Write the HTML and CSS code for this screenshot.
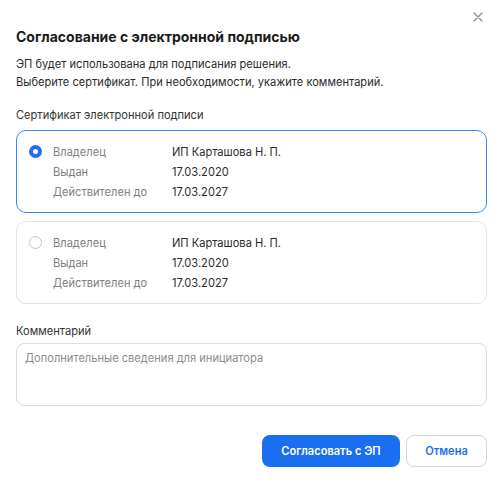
FILE: index.html
```html
<!DOCTYPE html>
<html lang="ru">
<head>
<meta charset="utf-8">
<link rel="stylesheet" href="styles.css">
</head>
<body>
<div class="dialog">
  <button class="close" aria-label="Закрыть">
    <svg width="10" height="10" viewBox="0 0 10 10"><path d="M1 1L9 9M9 1L1 9" stroke="#8a8a8a" stroke-width="1.2" stroke-linecap="round"/></svg>
  </button>
  <h1 class="title">Согласование с электронной подписью</h1>
  <p class="desc">ЭП будет использована для подписания решения.<br>Выберите сертификат. При необходимости, укажите комментарий.</p>
  <div class="label">Сертификат электронной подписи</div>
  <div class="cards">
    <div class="card selected">
      <span class="radio on"></span>
      <dl class="info">
        <dt>Владелец</dt><dd>ИП Карташова Н. П.</dd>
        <dt>Выдан</dt><dd>17.03.2020</dd>
        <dt>Действителен до</dt><dd>17.03.2027</dd>
      </dl>
    </div>
    <div class="card">
      <span class="radio"></span>
      <dl class="info">
        <dt>Владелец</dt><dd>ИП Карташова Н. П.</dd>
        <dt>Выдан</dt><dd>17.03.2020</dd>
        <dt>Действителен до</dt><dd>17.03.2027</dd>
      </dl>
    </div>
  </div>
  <div class="label comment-label">Комментарий</div>
  <div class="textarea">Дополнительные сведения для инициатора</div>
  <div class="actions">
    <button class="btn primary">Согласовать с ЭП</button>
    <button class="btn secondary">Отмена</button>
  </div>
</div>
</body>
</html>
```
FILE: styles.css
```css
* { box-sizing: border-box; }
body {
  margin: 0;
  background: #fff;
  font-family: Inter, "Noto Sans", sans-serif;
  color: #222;
}
.dialog {
  position: relative;
  width: 501px;
  height: 482px;
  padding: 27px 14px 0 16px;
}
.close {
  position: absolute;
  top: 12px;
  right: 18px;
  width: 10px;
  height: 10px;
  padding: 0;
  border: 0;
  background: none;
  display: flex;
}
.title {
  margin: 0;
  font-size: 14px;
  line-height: 20px;
  font-weight: 700;
  color: #1a1a1a;
}
.desc {
  margin: 8px 0 0;
  font-size: 11.1px;
  line-height: 18px;
  color: #2b2b2b;
}
.label {
  margin-top: 15px;
  font-size: 11.1px;
  line-height: 18px;
  color: #333;
}
.cards {
  margin-top: 6px;
  display: flex;
  flex-direction: column;
  gap: 8px;
}
.card {
  display: flex;
  align-items: flex-start;
  gap: 11px;
  padding: 11px 16px 10px 12px;
  border: 1px solid #e3e3e3;
  border-radius: 10px;
  height: 83px;
}
.card.selected { border-color: #3c86f2; }
.radio {
  flex: none;
  width: 13px;
  height: 13px;
  margin-top: 3px;
  border-radius: 50%;
  border: 1px solid #c4c4c4;
}
.radio.on {
  border: 4px solid #1b6ff0;
  background: #fff;
}
.info {
  margin: 0;
  display: grid;
  grid-template-columns: 119px auto;
  font-size: 11.1px;
  line-height: 20px;
}
.info dt { color: #808080; }
.info dd { margin: 0; color: #2b2b2b; }
.comment-label {
  margin-top: 18px;
}
.textarea {
  margin-top: 3px;
  height: 63px;
  border: 1px solid #dcdcdc;
  border-radius: 8px;
  padding: 5px 8px;
  font-size: 11.1px;
  line-height: 18px;
  color: #8c8c8c;
}
.actions {
  margin-top: 29px;
  display: flex;
  justify-content: flex-end;
  gap: 6px;
}
.btn {
  height: 32px;
  border-radius: 8px;
  font-family: Inter, "Noto Sans", sans-serif;
  font-size: 11.1px;
  font-weight: 600;
  padding: 0;
  cursor: pointer;
}
.primary {
  width: 138px;
  background: #1a6ff0;
  border: 0;
  color: #fff;
}
.secondary {
  width: 81px;
  background: #fff;
  border: 1px solid #d4d4d4;
  color: #1a6ff0;
}
```
